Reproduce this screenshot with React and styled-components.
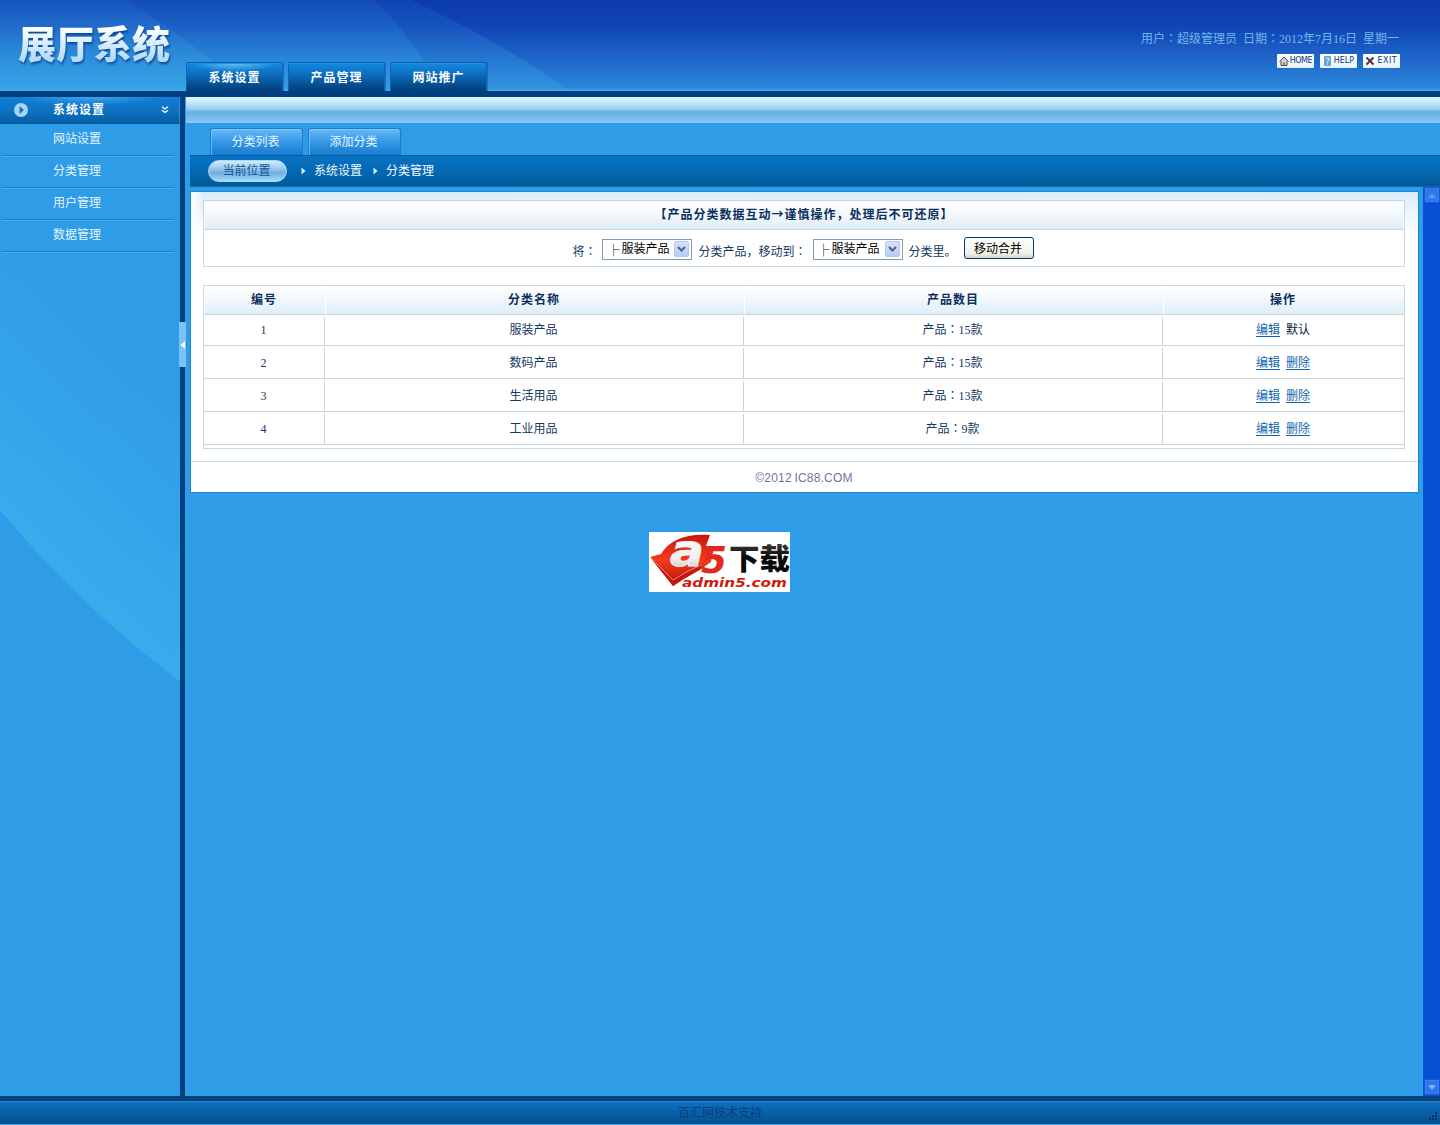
import styled, { createGlobalStyle, css } from 'styled-components';

const GlobalStyle = createGlobalStyle`
  * {
    box-sizing: border-box;
  }
  body {
    margin: 0;
    background: #2f9ce8;
    font-family: "Liberation Serif", "Noto Sans CJK SC", serif;
    font-size: 12px;
    line-height: 16px;
    word-spacing: 3px;
  }
`;

const MENU = ['网站设置', '分类管理', '用户管理', '数据管理'];
const NAV = ['系统设置', '产品管理', '网站推广'];
const ROWS = [
  { id: 1, name: '服装产品', count: 15, fixed: true },
  { id: 2, name: '数码产品', count: 15 },
  { id: 3, name: '生活用品', count: 13 },
  { id: 4, name: '工业用品', count: 9 },
];

const Page = styled.div`
  display: flex;
  flex-direction: column;
  width: 1440px;
  height: 1125px;
  overflow: hidden;
`;

const Header = styled.header`
  position: relative;
  display: flex;
  height: 97px;
  border-bottom: 6px solid #023f7f;
  background: linear-gradient(#0c3baf, #1145b6 30%, #2b87da 97%, #4ba0e2 99%);
`;

const HeaderRays = styled.svg`
  position: absolute;
  top: 0;
  left: 0;
`;

const Logo = styled.div`
  position: relative;
  width: 186px;
  padding: 14px 0 0 18px;
`;

const LogoText = styled.span`
  font: 900 38px/56px "Noto Sans CJK SC", sans-serif;
  white-space: nowrap;
  color: transparent;
  background: linear-gradient(#fff 25%, #b4dcfa 80%);
  background-clip: text;
  filter: drop-shadow(1px 2px 1px rgba(0, 50, 120, .7));
`;

const Nav = styled.nav`
  position: relative;
  display: flex;
  gap: 5px;
  align-items: flex-end;
`;

const NavTab = styled.a`
  width: 97px;
  height: 29px;
  border: 1px solid #0b66b4;
  border-top-color: #0660a8;
  border-bottom: 0;
  border-radius: 2px 2px 0 0;
  background: ${(props) => (props.$active
    ? 'radial-gradient(ellipse 42px 9px at 50% 0, rgba(130, 215, 255, .75), transparent), '
    : '')}linear-gradient(#1389df, #0f75c8 30%, #02427f 95%);
  box-shadow: inset 0 1px 0 #2390dd, 1px 0 0 rgba(20, 90, 180, .6);
  color: #fff;
  font-weight: bold;
  letter-spacing: 1px;
  line-height: 31px;
  text-align: center;
`;

const UserBox = styled.div`
  position: relative;
  display: flex;
  flex-direction: column;
  align-items: flex-end;
  margin-left: auto;
  padding: 31px 40px 0 0;
  color: #76b6ee;
`;

const UserLine = styled.div`
  height: 16px;
  margin-right: 1px;
`;

const QuickLinks = styled.div`
  display: flex;
  gap: 6px;
  margin-top: 7px;
`;

const QuickLink = styled.a`
  display: flex;
  align-items: center;
  justify-content: space-between;
  width: 37px;
  height: 14px;
  padding: 0 ${(props) => props.$end}px 0 2px;
  border-radius: 1px;
  background: linear-gradient(#fff, #e4f3fd);
  color: #10387c;
  font: 8px/14px "DejaVu Sans", sans-serif;
  letter-spacing: ${(props) => props.$tracking || 0}px;
`;

const Body = styled.div`
  display: flex;
  height: 999px;
`;

const Sidebar = styled.aside`
  position: relative;
  width: 180px;
`;

const SidebarLight = styled.svg`
  position: absolute;
  top: 27px;
  left: 0;
`;

const MenuHead = styled.div`
  position: relative;
  display: flex;
  align-items: center;
  height: 27px;
  padding: 0 10px 0 14px;
  border-right: 1px solid #2b8bd8;
  border-bottom: 2px solid #045a9f;
  background:
    radial-gradient(ellipse 70px 8px at 50% 0, rgba(90, 190, 250, .6), transparent),
    linear-gradient(#127fd5, #0e73c5 50%, #0660a8);
  color: #fff;
  font-weight: bold;
  letter-spacing: 1px;
`;

const MenuTitle = styled.span`
  flex: 1;
  padding-left: 25px;
`;

const Menu = styled.ul`
  position: relative;
  margin: 0;
  padding: 1px 6px 0 2px;
  list-style: none;
`;

const MenuItem = styled.li`
  height: 32px;
  padding-left: 51px;
  border-bottom: 1px solid #4aabee;
  box-shadow: inset 0 -1px 0 #1a80cb;
  color: #e2f6ff;
  line-height: 28px;
`;

const Divider = styled.div`
  width: 5px;
  padding-top: 225px;
  background: #024281;
`;

const Handle = styled.div`
  position: relative;
  display: flex;
  align-items: center;
  width: 7px;
  height: 45px;
  margin-left: -1px;
  background: #7dc1f7;
`;

const Main = styled.main`
  flex: 1;
  min-width: 0;
`;

const Strip = styled.div`
  height: 26px;
  margin-left: 1px;
  background: linear-gradient(#d9f5fe 0, #d0eefb 14%, #9bcff0 45%, #8bc5ef 50%, #6cb1e5 56%, #6cb2e6 66%, #8acaf5);
`;

const SubTabs = styled.div`
  display: flex;
  gap: 5px;
  height: 32px;
  padding: 5px 0 0 25px;
`;

const SubTab = styled.a`
  width: 93px;
  padding-right: 2px;
  border: 1px solid #1b7cca;
  border-bottom: 0;
  border-radius: 3px 3px 0 0;
  background: linear-gradient(#65b9f6, #3a9ae8 45%, #167bd0);
  box-shadow: inset 1px 1px 0 rgba(160, 215, 255, .55);
  color: #e6f7ff;
  line-height: 27px;
  text-align: center;
`;

const Crumbs = styled.div`
  display: flex;
  align-items: center;
  height: 32px;
  margin-left: 5px;
  padding: 0 0 1px 18px;
  border-top: 1px solid #055b9f;
  border-bottom: 1px solid #0b6ab6;
  background: linear-gradient(#0773c3, #0568b3 50%, #025896);
  color: #f0faff;
`;

const Pill = styled.span`
  width: 79px;
  height: 22px;
  margin-right: 14px;
  padding-right: 2px;
  border: 1px solid #a6d9fa;
  border-radius: 11px;
  background: linear-gradient(#d2ecfb, #9fcbec 35%, #6fafdf 60%, #a2dafc);
  color: #115697;
  line-height: 20px;
  text-align: center;
`;

const Crumb = styled.span`
  display: flex;
  align-items: center;
  gap: 8px;
  margin-right: 11px;
`;

const Work = styled.div`
  display: flex;
  height: 909px;
`;

const WorkArea = styled.div`
  flex: 1;
  padding: 4px 4px 0 5px;
`;

const Panel = styled.section`
  height: 302px;
  border: 1px solid #2086d6;
  background: linear-gradient(#d9ecfa, #fff 42px);
`;

const PanelInner = styled.div`
  height: 269px;
  padding: 8px 13px 0 12px;
  background: linear-gradient(90deg, #fff, transparent 12px);
`;

const Card = styled.div`
  border: 1px solid #c6dae6;
  background: #fff;
`;

const headCell = css`
  background: linear-gradient(#fff, #f6fafd 35%, #e0edf7);
  color: #0b2f5c;
  font-weight: bold;
  letter-spacing: 1px;
`;

const CardTitle = styled.div`
  height: 28px;
  border: 1px solid #f6fafc;
  border-width: 1px 1px 0;
  ${headCell}
  line-height: 27px;
  text-align: center;
`;

const MoveForm = styled.div`
  display: flex;
  justify-content: center;
  gap: 6px;
  height: 37px;
  padding: 8px 2px 0 0;
  border-top: 1px solid #c6dae6;
  color: #14395f;
`;

const FormText = styled.span`
  padding-top: 6px;
`;

const SelectBox = styled.span`
  display: flex;
  width: 90px;
  height: 21px;
  margin-top: 1px;
  padding: 1px 1px 1px 4px;
  border: 1px solid #7f9db9;
  background: #fff;
  color: #000;
  line-height: 17px;
`;

const Branch = styled.span`
  width: 14px;
  font-family: "Noto Sans CJK SC", sans-serif;
  font-weight: 500;
`;

const SelectArrow = styled.span`
  display: flex;
  align-items: center;
  justify-content: center;
  width: 15px;
  height: 16px;
  margin: 0 1px 0 auto;
  border: 1px solid #b6c8f2;
  border-radius: 2px;
  background: linear-gradient(#d5e0fd, #b9cbf5);
`;

const PushButton = styled.button`
  width: 70px;
  height: 22px;
  margin: -1px 0 0 1px;
  padding: 1px 1px 0 0;
  border: 1px solid #003c74;
  border-radius: 3px;
  background: linear-gradient(#fff, #f3f2ec 75%, #d8d2c4);
  color: #000;
  font: inherit;
`;

const Table = styled.div`
  height: 164px;
  margin-top: 18px;
  border: 1px solid #c6dae6;
  background: #fff;
`;

const Row = styled.div`
  display: grid;
  grid-template-columns: 121px 419px 419px 1fr;
  height: 33px;
  padding-top: 2px;
  border-bottom: 1px solid #c6d8e2;
  color: #14395f;
  text-align: center;
  &:nth-child(2) {
    height: 31px;
  }
`;

const HeadRow = styled(Row)`
  height: 29px;
  padding: 0;
`;

const HeadCell = styled.div`
  ${headCell}
  padding-right: 2px;
  border-left: 1px solid #fff;
  line-height: 28px;
`;

const Cell = styled.div`
  padding-right: 1px;
  line-height: ${(props) => (props.$first ? 26 : 30)}px;
  &:not(:last-child) {
    border-right: 1px solid #c6d8e2;
  }
`;

const Action = styled.a`
  color: #1265ad;
  text-decoration: underline;
  text-underline-offset: 2px;
`;

const Plain = styled.span`
  color: #0b2440;
`;

// full-width colons and arrows sit in the middle of their cell
const Wide = styled.span`
  font-family: "Noto Sans CJK TC", sans-serif;
  line-height: 1px;
`;

const Copyright = styled.div`
  height: 31px;
  padding: 1px 1px 0 0;
  border-top: 1px solid #cfdfe8;
  background: #fff;
  color: #7373a3;
  font-family: "Liberation Sans", sans-serif;
  line-height: 31px;
  text-align: center;
  word-spacing: -1px;
  letter-spacing: .2px;
`;

const BadgeWrap = styled.div`
  padding: 39px 0 0 459px;
`;

const BadgeArt = styled.svg`
  display: block;
  overflow: visible;
`;

const ScrollBar = styled.div`
  display: flex;
  flex-direction: column;
  justify-content: space-between;
  width: 17px;
  padding: 0 0 1px 1px;
  background: #0750d3;
`;

const ScrollArrow = styled.span`
  display: flex;
  align-items: center;
  justify-content: center;
  width: 16px;
  height: 16px;
  border: 1px solid #1b55cf;
  background: #2f76ea;
  box-shadow: inset 0 0 0 1px #3a7df0;
`;

const Footer = styled.footer`
  height: 29px;
  border-top: 5px solid #02427f;
  border-bottom: 1px solid #3c9ee2;
  background: linear-gradient(#2a86cc, #0e6dbb 10%, #04508f);
  color: #043f7c;
  display: flex;
  align-items: center;
  justify-content: center;
  position: relative;
`;

const Grip = styled.svg`
  position: absolute;
  right: 1px;
  bottom: 3px;
`;

function Triangle() {
  return (
    <svg width="5" height="8" viewBox="0 0 5 8">
      <path d="M0.5 0.5 L4.5 4 L0.5 7.5Z" fill="#d5f2ff" />
    </svg>
  );
}

function Select({ label }) {
  return (
    <SelectBox>
      <Branch>├</Branch>
      {label}
      <SelectArrow>
        <svg width="9" height="6" viewBox="0 0 9 6">
          <path d="M1 1 L4.5 4.5 L8 1" fill="none" stroke="#4d6185" strokeWidth="2" />
        </svg>
      </SelectArrow>
    </SelectBox>
  );
}

function Badge() {
  return (
    <BadgeWrap>
      <BadgeArt width="141" height="60" viewBox="0 0 141 60">
        <defs>
          <linearGradient id="red" x1="0" y1="0" x2="0" y2="1">
            <stop offset="0" stopColor="#c9160a" />
            <stop offset=".5" stopColor="#f23c20" />
            <stop offset="1" stopColor="#b50d06" />
          </linearGradient>
          <linearGradient id="silver" x1="0" y1="0" x2="0" y2="1">
            <stop offset="0" stopColor="#fff" />
            <stop offset=".65" stopColor="#f0f0f0" />
            <stop offset="1" stopColor="#aaa" />
          </linearGradient>
          <linearGradient id="ink" x1="0" y1="0" x2="0" y2="1">
            <stop offset="0" stopColor="#555" />
            <stop offset=".5" stopColor="#0a0a0a" />
          </linearGradient>
        </defs>
        <rect width="141" height="60" fill="#fff" />
        <path d="M1 25 L12 22 C20 8 38 1 61 3 L57 14 H66 L64 20 L62 30 L52 37 L33 48 L24 54Z" fill="url(#red)" />
        <path d="M1 25 L24 49 L33 43 L52 33 L52 37 L33 48 L24 54Z" fill="#c2180f" />
        <path d="M1 25 L24 48 Q36 40 52 33" fill="none" stroke="#f79a8c" strokeWidth=".8" />
        <text x="21" y="34" fontFamily="DejaVu Sans" fontSize="45" fontWeight="bold" fontStyle="italic" textLength="34" lengthAdjust="spacingAndGlyphs" fill="url(#silver)" stroke="#f4f4f4" strokeWidth="1">a</text>
        <text x="52" y="41" fontFamily="DejaVu Sans" fontSize="37" fontWeight="bold" fontStyle="italic" textLength="26" lengthAdjust="spacingAndGlyphs" fill="#e3291a">5</text>
        <text x="80" y="38" fontFamily="Noto Sans CJK SC" fontSize="29" fontWeight="900" textLength="61" lengthAdjust="spacingAndGlyphs" fill="url(#ink)">下载</text>
        <text x="33" y="55" fontFamily="DejaVu Sans" fontSize="13" fontWeight="bold" fontStyle="italic" textLength="105" lengthAdjust="spacingAndGlyphs" fill="#d01a10">admin5.com</text>
      </BadgeArt>
    </BadgeWrap>
  );
}

function TopBar() {
  return (
    <Header>
      <HeaderRays width="600" height="91">
        <defs>
          <linearGradient id="ray" x1="0" y1="0" x2="0" y2="1">
            <stop offset="0" stopColor="#3cb4f0" stopOpacity=".07" />
            <stop offset="1" stopColor="#3cb0ec" stopOpacity=".3" />
          </linearGradient>
        </defs>
        <path d="M0 0 H410 Q495 38 570 91 H0Z" fill="url(#ray)" />
        <path d="M0 0 H375 Q405 30 445 91 H0Z" fill="url(#ray)" />
        <path d="M0 0 H128 Q185 38 250 91 H0Z" fill="url(#ray)" />
      </HeaderRays>
      <Logo>
        <LogoText>展厅系统</LogoText>
      </Logo>
      <Nav>
        {NAV.map((item, index) => (
          <NavTab key={item} $active={index === 0}>{item}</NavTab>
        ))}
      </Nav>
      <UserBox>
        <UserLine>
          用户<Wide>：</Wide>超级管理员 日期<Wide>：</Wide>2012年7月16日 星期一
        </UserLine>
        <QuickLinks>
          <QuickLink $end={2} $tracking={-0.5}>
            <svg width="10" height="10" viewBox="0 0 10 10">
              <path d="M0.5 5.5 L5 1 L9.5 5.5 M2 5 V9.5 H8 V5 M5 9 V6" fill="#d8cfc4" stroke="#5c4c4c" />
            </svg>
            HOME
          </QuickLink>
          <QuickLink $end={3}>
            <svg width="10" height="10" viewBox="0 0 10 10">
              <rect x="2" y="0" width="7" height="10" rx="1" fill="#6da2dc" />
              <path d="M4 3.2 Q5.5 1 7 3 Q7 4.5 5.5 5.4 V6.4 M5.5 7.5 V8.6" fill="none" stroke="#fff" />
            </svg>
            HELP
          </QuickLink>
          <QuickLink $end={3} $tracking={0.4}>
            <svg width="10" height="10" viewBox="0 0 10 10">
              <path d="M1.5 1.5 L8.5 8.5 M8.5 1.5 L1.5 8.5" stroke="#4a3038" strokeWidth="1.8" />
            </svg>
            EXIT
          </QuickLink>
        </QuickLinks>
      </UserBox>
    </Header>
  );
}

function SideMenu() {
  return (
    <Sidebar>
      <SidebarLight width="180" height="560">
        <defs>
          <linearGradient id="glow" gradientUnits="userSpaceOnUse" x1="90" y1="470" x2="230" y2="320">
            <stop offset="0" stopColor="#3aafec" stopOpacity=".8" />
            <stop offset="1" stopColor="#3aafec" stopOpacity="0" />
          </linearGradient>
        </defs>
        <path d="M0 0 H180 V557 Q80 483 0 386Z" fill="url(#glow)" />
      </SidebarLight>
      <MenuHead>
        <svg width="14" height="14" viewBox="0 0 14 14">
          <circle cx="7" cy="7" r="7" fill="#a5d5f8" />
          <path d="M5.5 3 L10 7 L5.5 11Z" fill="#2c6fae" />
        </svg>
        <MenuTitle>系统设置</MenuTitle>
        <svg width="8" height="8" viewBox="0 0 8 8">
          <path d="M1 0.8 L4 3 L7 0.8 M1 4.3 L4 6.5 L7 4.3" fill="none" stroke="#fff" strokeWidth="1.4" />
        </svg>
      </MenuHead>
      <Menu>
        {MENU.map((item) => <MenuItem key={item}>{item}</MenuItem>)}
      </Menu>
    </Sidebar>
  );
}

function CategoryTable() {
  return (
    <Table>
      <HeadRow>
        <HeadCell>编号</HeadCell>
        <HeadCell>分类名称</HeadCell>
        <HeadCell>产品数目</HeadCell>
        <HeadCell>操作</HeadCell>
      </HeadRow>
      {ROWS.map((row, index) => (
        <Row key={row.id}>
          <Cell $first={index === 0}>{row.id}</Cell>
          <Cell $first={index === 0}>{row.name}</Cell>
          <Cell $first={index === 0}>产品<Wide>：</Wide>{row.count}款</Cell>
          <Cell $first={index === 0}>
            <Action>编辑</Action>
            {' '}
            {row.fixed ? <Plain>默认</Plain> : <Action>删除</Action>}
          </Cell>
        </Row>
      ))}
    </Table>
  );
}

function App() {
  return (
    <Page>
      <GlobalStyle />
      <TopBar />
      <Body>
        <SideMenu />
        <Divider>
          <Handle>
            <svg width="6" height="8" viewBox="0 0 6 8">
              <path d="M6 0 L1.5 4 L6 8Z" fill="#fff" />
            </svg>
          </Handle>
        </Divider>
        <Main>
          <Strip />
          <SubTabs>
            <SubTab>分类列表</SubTab>
            <SubTab>添加分类</SubTab>
          </SubTabs>
          <Crumbs>
            <Pill>当前位置</Pill>
            <Crumb><Triangle />系统设置</Crumb>
            <Crumb><Triangle />分类管理</Crumb>
          </Crumbs>
          <Work>
            <WorkArea>
              <Panel>
                <PanelInner>
                  <Card>
                    <CardTitle>【产品分类数据互动<Wide>→</Wide>谨慎操作，处理后不可还原】</CardTitle>
                    <MoveForm>
                      <FormText>将<Wide>：</Wide></FormText>
                      <Select label="服装产品" />
                      <FormText>分类产品，移动到<Wide>：</Wide></FormText>
                      <Select label="服装产品" />
                      <FormText>分类里。</FormText>
                      <PushButton>移动合并</PushButton>
                    </MoveForm>
                  </Card>
                  <CategoryTable />
                </PanelInner>
                <Copyright>©2012 IC88.COM</Copyright>
              </Panel>
              <Badge />
            </WorkArea>
            <ScrollBar>
              <ScrollArrow>
                <svg width="8" height="5"><path d="M0 5 L4 0 L8 5Z" fill="#5c9bf5" /></svg>
              </ScrollArrow>
              <ScrollArrow>
                <svg width="8" height="5"><path d="M0 0 L4 5 L8 0Z" fill="#7fb2f8" /></svg>
              </ScrollArrow>
            </ScrollBar>
          </Work>
        </Main>
      </Body>
      <Footer>
        百汇网技术支持
        <Grip width="10" height="9" viewBox="0 0 10 9">
          <path d="M6 0h2v2H6z M3 3h2v2H3z M6 3h2v2H6z M0 6h2v2H0z M3 6h2v2H3z M6 6h2v2H6z" fill="#06305c" />
        </Grip>
      </Footer>
    </Page>
  );
}

export default App;
